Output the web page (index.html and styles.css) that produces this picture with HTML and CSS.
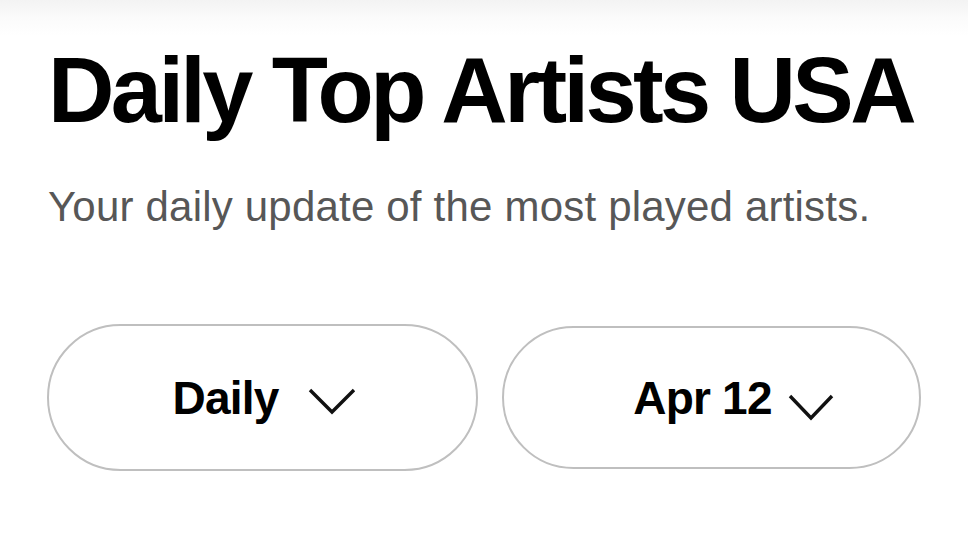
FILE: index.html
```html
<!DOCTYPE html>
<html lang="en">
<head>
<meta charset="utf-8">
<title>Daily Top Artists USA</title>
<link rel="stylesheet" href="styles.css">
</head>
<body>
<main class="chart-header">
  <h1 class="chart-title">Daily Top Artists USA</h1>
  <p class="chart-subtitle">Your daily update of the most played artists.</p>
  <div class="filters">
    <button class="pill pill--period" type="button">
      <span class="pill-label">Daily</span>
      <svg class="chevron" width="48" height="27" viewBox="0 0 48 27" aria-hidden="true">
        <polyline points="2,2 24,24 46,2" fill="none" stroke="#111" stroke-width="3.4" stroke-linecap="butt" stroke-linejoin="miter"/>
      </svg>
    </button>
    <button class="pill pill--date" type="button">
      <span class="pill-label">Apr 12</span>
      <svg class="chevron" width="46" height="27" viewBox="0 0 46 27" aria-hidden="true">
        <polyline points="2,2 23,24 44,2" fill="none" stroke="#111" stroke-width="3.4" stroke-linecap="butt" stroke-linejoin="miter"/>
      </svg>
    </button>
  </div>
</main>
</body>
</html>
```
FILE: styles.css
```css
html, body {
  margin: 0;
  padding: 0;
}

body {
  width: 968px;
  height: 544px;
  overflow: hidden;
  background: linear-gradient(to bottom, #f3f3f3 0px, #fbfbfb 18px, #ffffff 36px, #ffffff 100%);
  font-family: "Liberation Sans", Arial, sans-serif;
  color: #000;
}

.chart-header {
  padding: 44px 0 0 48px;
}

.chart-title {
  margin: 0;
  font-size: 92px;
  line-height: 92px;
  font-weight: 700;
  letter-spacing: -3.6px;
  color: #000;
}

.chart-subtitle {
  margin: 50px 0 0 0;
  font-size: 42px;
  line-height: 42px;
  font-weight: 400;
  color: #575757;
  letter-spacing: 0.2px;
}

.filters {
  display: flex;
  align-items: center;
  gap: 24px;
  margin-top: 96px;
  margin-left: -1px;
}

.pill {
  box-sizing: border-box;
  display: flex;
  align-items: center;
  justify-content: center;
  background: #fff;
  border: 2.5px solid #bfbfbf;
  border-radius: 80px;
  font-family: inherit;
  color: #000;
  padding: 0;
  cursor: pointer;
}

.pill--period {
  width: 431px;
  height: 147px;
  gap: 30px;
  padding-left: 4px;
}

.pill--date {
  width: 419px;
  height: 143px;
  gap: 16px;
  padding-left: 44px;
}

.pill-label {
  font-size: 46px;
  line-height: 46px;
  font-weight: 700;
  letter-spacing: -0.8px;
}

.pill--period .chevron {
  margin-top: 8px;
}

.pill--date .chevron {
  margin-top: 20px;
}
```
